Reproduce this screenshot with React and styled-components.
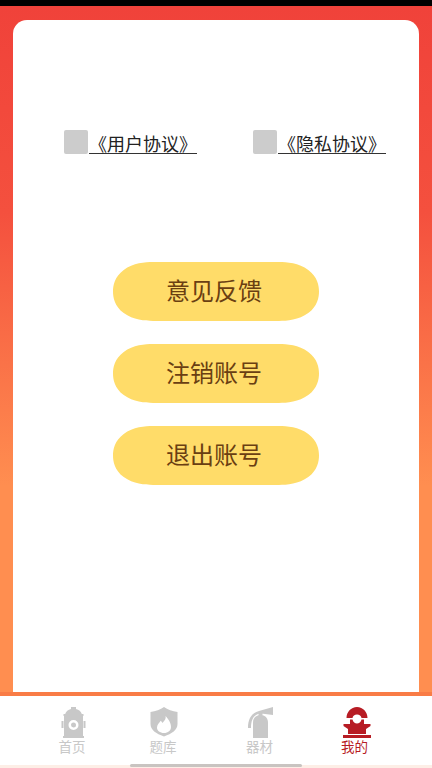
import React from "react";
import styled, { createGlobalStyle } from "styled-components";

const Global = createGlobalStyle`
  html, body { margin: 0; padding: 0; }
  body { font-family: "Noto Sans CJK SC", "Liberation Sans", sans-serif; }
`;
const Screen = styled.div`
  width: 432px; height: 768px; display: flex; flex-direction: column; overflow: hidden; background: #fff;
`;
const StatusBar = styled.div`height: 6px; background: #000; flex: none;`;
const Backdrop = styled.main`
  flex: 1; min-height: 0; padding: 14px 13px 0;
  background: linear-gradient(180deg, #f0423a 0%, #f4503e 30%, #ff8e50 70%, #ff8e50 100%);
  display: flex;
`;
const Card = styled.section`
  flex: 1; background: #fff; border-radius: 14px 14px 0 0;
  display: flex; flex-direction: column; align-items: center;
`;
const Agreements = styled.div`
  margin-top: 110px; width: 100%; box-sizing: border-box; padding: 0 33px 0 51px;
  display: flex; justify-content: space-between;
`;
const Agreement = styled.div`display: flex; align-items: flex-start; gap: 1px;`;
const Check = styled.div`width: 24px; height: 24px; border-radius: 2px; background: #ccc;`;
const AgreementLink = styled.a`
  height: 23px; line-height: 26px; font-size: 18px; color: #222; border-bottom: 1px solid #333;
  white-space: nowrap; width: 108px;
`;
const Actions = styled.div`margin-top: 108px; display: flex; flex-direction: column; gap: 23px;`;
const Action = styled.button`
  width: 206px; height: 59px; border: 0; padding: 0 4px 4px 0; background: #ffdc69;
  border-radius: 40px / 29.5px; corner-shape: superellipse(1.15);
  color: #6a3f12; font-size: 24px; font-weight: 400; font-family: inherit;
`;
const TabBar = styled.nav`
  flex: none; height: 72px; position: relative; border-top: 4px solid #f97c46;
  background: linear-gradient(180deg, #fff 0 69px, #fdeee6 69px);
  display: grid; grid-template-columns: 88px 94px 99px 91px; padding-left: 28px;
`;
const Tab = styled.div`
  display: flex; flex-direction: column; align-items: center; padding-top: 11px;
  color: ${p => (p.$active ? "#b71c24" : "#c8c8c8")};
`;
const TabIcon = styled.svg`width: 32px; height: 32px; display: block; fill: currentColor;`;
const TabLabel = styled.span`font-size: 13.5px; line-height: 14px;`;
const Indicator = styled.div`
  position: absolute; left: 130px; bottom: 1px; width: 172px; height: 3px; border-radius: 2px; background: #c9c4c1;
`;

const Hydrant = () => (
  <TabIcon viewBox="0 0 32 32">
    <path fillRule="evenodd" d="M15 0h5v2c3 .8 5 2.500 5.800 5h1.700v2H27v20h1v2H7v-2h1V9h-.5V7h1.700C10 4.500 12 2.800 15 2zM17.500 13a5 5 0 1 0 0 10 5 5 0 0 0 0-10zm0 2.500a2.500 2.500 0 1 1 0 5 2.500 2.500 0 0 1 0-5z" />
    <path d="M5.500 14h2v7h-2zM27.500 14h2v7h-2z" />
  </TabIcon>
);
const Shield = () => (
  <TabIcon viewBox="0 0 32 32">
    <path fillRule="evenodd" d="M17 0c3.500 2.500 8.500 4.300 13.500 5v12c0 6-5.500 9.500-13.500 12.500C9 26.500 3.500 23 3.500 17V5C8.500 4.300 13.500 2.500 17 0zm1.500 9c.8 3.500-1.500 5-3 7-.6-1-1-1.600-1.800-2.200C12.500 16 10 17.500 10 20.500c0 3.200 3 5.500 7 5.500s7-2.500 7-6c0-4.500-3-8.500-5.500-11z" />
  </TabIcon>
);
const Extinguisher = () => (
  <TabIcon viewBox="0 0 32 32">
    <path d="M9 31V15.500C9 11 12 8 16.500 8S24 11 24 15.500V31z" />
    <path d="M14.500 5h4v4h-4z" />
    <path d="M4 21c0-9 3.500-15 11-17L29 0v8l-12-1.500C10 7 7 12.500 7 21z" />
  </TabIcon>
);
const Mine = () => (
  <TabIcon viewBox="0 0 32 32">
    <path d="M7.500 11C7.500 5 12 0 18 0s10.500 5 10.500 11h-6c-.4-2-2-3.500-4.500-3.500S13.900 9 13.500 11z" />
    <path d="M11 12.500h2.500c.5 2.500 2.500 4 4.500 4s4-1.500 4.500-4H25v4.500h6.500v2L27 22v5H9v-5l-4.500-3v-2H11z" />
    <path d="M4 28h28v3H4z" />
  </TabIcon>
);

export default function App() {
  return (
    <Screen>
      <Global />
      <StatusBar />
      <Backdrop>
        <Card>
          <Agreements>
            <Agreement><Check /><AgreementLink>《用户协议》</AgreementLink></Agreement>
            <Agreement><Check /><AgreementLink>《隐私协议》</AgreementLink></Agreement>
          </Agreements>
          <Actions>
            <Action>意见反馈</Action>
            <Action>注销账号</Action>
            <Action>退出账号</Action>
          </Actions>
        </Card>
      </Backdrop>
      <TabBar>
        <Tab><Hydrant /><TabLabel>首页</TabLabel></Tab>
        <Tab><Shield /><TabLabel>题库</TabLabel></Tab>
        <Tab><Extinguisher /><TabLabel>器材</TabLabel></Tab>
        <Tab $active><Mine /><TabLabel>我的</TabLabel></Tab>
        <Indicator />
      </TabBar>
    </Screen>
  );
}
